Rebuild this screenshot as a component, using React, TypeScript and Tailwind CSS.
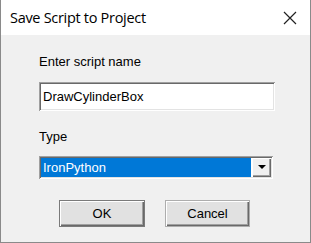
import React from 'react'

const sunken =
  'shadow-[inset_1px_1px_#a0a0a0,inset_-1px_-1px_#ffffff,inset_2px_2px_#696969,inset_-2px_-2px_#e3e3e3]'
const raised =
  'shadow-[inset_1px_1px_#ffffff,inset_-1px_-1px_#696969,inset_-2px_-2px_#a0a0a0]'

const App = () => {
  return (
    <div className="w-[311px] h-[243px] flex flex-col bg-[#f0f0f0] border-x border-b border-[#8a8a8a] font-['Liberation_Sans',sans-serif] text-black select-none">
      {/* title bar */}
      <div className="h-[35px] bg-white flex items-center justify-between pl-[9px] pr-[13px] shrink-0">
        <span className="text-[14.5px] font-['Open_Sans',sans-serif] tracking-[-0.3px]">Save Script to Project</span>
        <svg width="14" height="14" viewBox="0 0 14 14">
          <path d="M1 1L13 13M13 1L1 13" stroke="#222" strokeWidth="1.2" />
        </svg>
      </div>

      <div className="flex flex-col pl-[38px] text-[13px]">
        <div className="mt-[19px] leading-[16px]">Enter script name</div>

        <div className={`mt-[12px] w-[236px] h-[29px] bg-white ${sunken} flex items-center pl-[4px]`}>
          DrawCylinderBox
        </div>

        <div className="mt-[18px] leading-[16px]">Type</div>

        <div className={`mt-[11px] w-[234px] h-[23px] bg-white ${sunken} flex p-[2px]`}>
          <div className="flex-1 bg-[#0078d7] text-white flex items-center pl-[2px] mr-[1px]">
            IronPython
          </div>
          <div className={`w-[19px] bg-[#f0f0f0] ${raised} flex items-center justify-center`}>
            <svg width="8" height="5" viewBox="0 0 8 5">
              <path d="M0 0H8L4 4Z" fill="#000" />
            </svg>
          </div>
        </div>

        <div className="mt-[21px] flex gap-[20px] pl-[20px]">
          <button className={`w-[86px] h-[27px] bg-[#e1e1e1] border border-[#7a7a7a] ${raised} flex items-center justify-center`}>
            OK
          </button>
          <button className={`w-[85px] h-[27px] bg-[#e1e1e1] border border-[#adadad] ${raised} flex items-center justify-center`}>
            Cancel
          </button>
        </div>
      </div>
    </div>
  )
}

export default App
